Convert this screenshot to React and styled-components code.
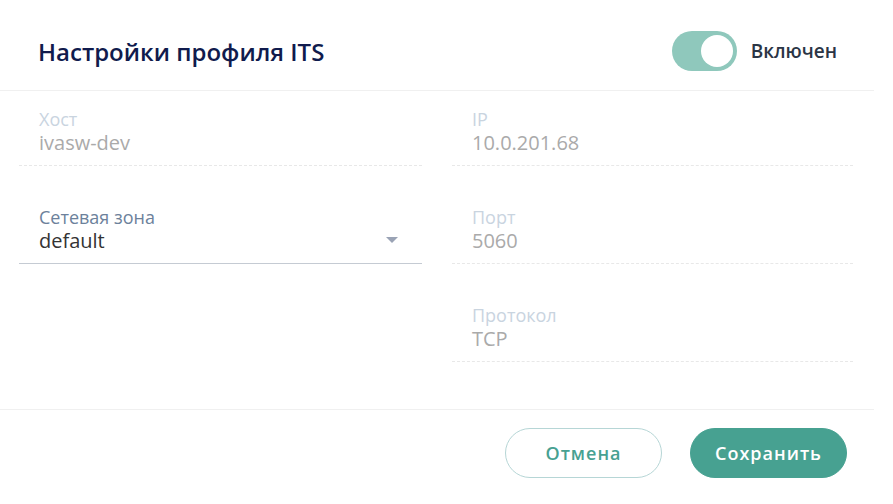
import React from "react";
import styled, { createGlobalStyle } from "styled-components";

const Global = createGlobalStyle`
  html, body { margin: 0; padding: 0; background: #ffffff; }
  body { font-family: "Open Sans", "Noto Sans", sans-serif; }
  * { box-sizing: border-box; }
`;

const Dialog = styled.div`
  width: 874px;
  background: #ffffff;
`;

const Header = styled.header`
  height: 91px;
  display: flex;
  align-items: center;
  justify-content: space-between;
  padding: 12px 37px 0 38px;
  border-bottom: 1px solid #f0f0f0;
`;

const Title = styled.h1`
  margin: 0;
  font-size: 24px;
  font-weight: 600;
  color: #101b4d;
`;

const ToggleWrap = styled.label`
  display: flex;
  align-items: center;
  gap: 14px;
  font-size: 19px;
  font-weight: 600;
  color: #2b3545;
`;

const Track = styled.span`
  position: relative;
  width: 65px;
  height: 40px;
  border-radius: 20px;
  background: ${(p) => (p.$on ? "#8fc8bc" : "#d0d5dc")};
  display: inline-block;
`;

const Knob = styled.span`
  position: absolute;
  top: 4px;
  left: ${(p) => (p.$on ? "29px" : "4px")};
  width: 32px;
  height: 32px;
  border-radius: 50%;
  background: #ffffff;
`;

const Body = styled.div`
  display: grid;
  grid-template-columns: 403px 401px;
  column-gap: 30px;
  padding: 0 21px 47px 19px;
  align-items: start;
`;

const Column = styled.div`
  display: flex;
  flex-direction: column;
  gap: 23px;
`;

const Field = styled.div`
  position: relative;
  padding: 17px 20px 9px;
  border-bottom: 1px ${(p) => (p.$select ? "solid #c5cbd3" : "dashed #e8e8e8")};
`;

const Label = styled.div`
  font-size: 18px;
  line-height: 22px;
  color: ${(p) => (p.$active ? "#6c819b" : "#c9d4df")};
`;

const Value = styled.div`
  font-size: 20px;
  line-height: 26px;
  color: ${(p) => (p.$active ? "#333333" : "#aaaaaa")};
`;

const Arrow = styled.span`
  position: absolute;
  right: 24px;
  top: 48px;
  width: 0;
  height: 0;
  border-left: 6px solid transparent;
  border-right: 6px solid transparent;
  border-top: 6px solid #9aa3b5;
`;

const Footer = styled.footer`
  display: flex;
  justify-content: flex-end;
  gap: 28px;
  padding: 18px 27px 26px;
  border-top: 1px solid #f0f0f0;
`;

const Button = styled.button`
  width: 157px;
  height: 50px;
  border-radius: 25px;
  font-family: inherit;
  font-size: 18px;
  font-weight: 600;
  letter-spacing: 1px;
  cursor: pointer;
  border: 1px solid ${(p) => (p.$primary ? "#47a191" : "#b6d6d6")};
  background: ${(p) => (p.$primary ? "#47a191" : "#ffffff")};
  color: ${(p) => (p.$primary ? "#ffffff" : "#47a191")};
`;

function InfoField({ label, value }) {
  return (
    <Field>
      <Label>{label}</Label>
      <Value>{value}</Value>
    </Field>
  );
}

export default function App() {
  return (
    <>
      <Global />
      <Dialog>
        <Header>
          <Title>Настройки профиля ITS</Title>
          <ToggleWrap>
            <Track $on>
              <Knob $on />
            </Track>
            Включен
          </ToggleWrap>
        </Header>
        <Body>
          <Column>
            <InfoField label="Хост" value="ivasw-dev" />
            <Field $select>
              <Label $active>Сетевая зона</Label>
              <Value $active>default</Value>
              <Arrow />
            </Field>
          </Column>
          <Column>
            <InfoField label="IP" value="10.0.201.68" />
            <InfoField label="Порт" value="5060" />
            <InfoField label="Протокол" value="TCP" />
          </Column>
        </Body>
        <Footer>
          <Button>Отмена</Button>
          <Button $primary>Сохранить</Button>
        </Footer>
      </Dialog>
    </>
  );
}
